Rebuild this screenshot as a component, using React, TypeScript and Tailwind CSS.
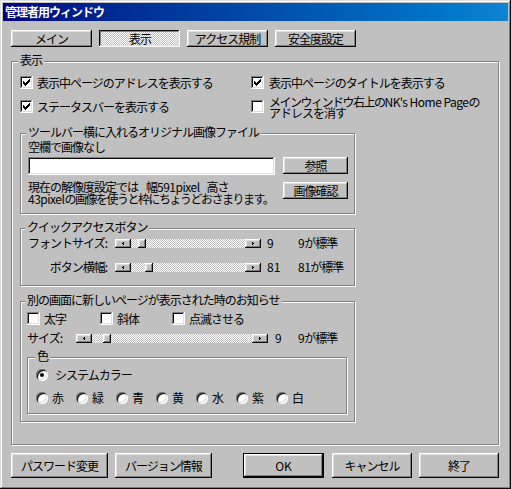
import React from 'react';

// classic 3D bevels
const raised = 'shadow-[inset_-1px_-1px_#0a0a0a,inset_1px_1px_#fff,inset_-2px_-2px_#808080,inset_2px_2px_#dfdfdf]';
const pressed = 'shadow-[inset_-1px_-1px_#fff,inset_1px_1px_#0a0a0a,inset_-2px_-2px_#dfdfdf,inset_2px_2px_#808080]';
const sunken = 'shadow-[inset_-1px_-1px_#fff,inset_1px_1px_#808080,inset_-2px_-2px_#dfdfdf,inset_2px_2px_#0a0a0a]';
const dither = 'bg-[image:repeating-conic-gradient(#fff_0%_25%,#c0c0c0_0%_50%)] bg-[length:2px_2px]';

interface BtnProps {
  className?: string;
  children: React.ReactNode;
  down?: boolean;
  isDefault?: boolean;
}

const Btn: React.FC<BtnProps> = ({ className = '', children, down, isDefault }) => (
  <div
    className={`flex shrink-0 items-center justify-center ${down ? `${pressed} ${dither} pt-[1px] pl-[1px]` : `bg-[#c0c0c0] ${raised}`} ${
      isDefault ? 'border border-black' : ''
    } ${className}`}
  >
    {children}
  </div>
);

// latin runs get a little less squeeze than the kana
const L: React.FC<{ children: React.ReactNode }> = ({ children }) => <span className="tracking-[-0.5px]">{children}</span>;

const Check: React.FC<{ checked?: boolean }> = ({ checked }) => (
  <span className={`flex h-[13px] w-[13px] shrink-0 items-center justify-center bg-white ${sunken}`}>
    {checked && (
      <svg width="7" height="7" viewBox="0 0 7 7" shapeRendering="crispEdges">
        <path d="M6 0h1v1H6zM5 1h2v1H5zM0 2h1v1H0zM4 2h3v1H4zM0 3h2v1H0zM3 3h3v1H3zM0 4h5v1H0zM1 5h3v1H1zM2 6h1v1H2z" fill="#000" />
      </svg>
    )}
  </span>
);

const Radio: React.FC<{ checked?: boolean }> = ({ checked }) => (
  <span className="flex h-[12px] w-[12px] shrink-0 items-center justify-center rounded-full bg-white shadow-[inset_1px_1px_#808080,inset_-1px_-1px_#fff,inset_2px_2px_#0a0a0a,inset_-2px_-2px_#dfdfdf]">
    {checked && <span className="h-[4px] w-[4px] rounded-full bg-black" />}
  </span>
);

const Slider: React.FC<{ className: string; thumbClass: string }> = ({ className, thumbClass }) => (
  <div className={`flex h-[9px] shrink-0 ${dither} ${className}`}>
    <span className={`flex w-[16px] items-center justify-center bg-[#c0c0c0] ${raised}`}>
      <svg width="2" height="3" viewBox="0 0 2 3" shapeRendering="crispEdges">
        <path d="M1 0h1v3H1zM0 1h1v1H0z" fill="#000" />
      </svg>
    </span>
    <span className={`w-[8px] bg-[#c0c0c0] ${raised} ${thumbClass}`} />
    <span className="flex-1" />
    <span className={`flex w-[16px] items-center justify-center bg-[#c0c0c0] ${raised}`}>
      <svg width="2" height="3" viewBox="0 0 2 3" shapeRendering="crispEdges">
        <path d="M0 0h1v3H0zM1 1h1v1H1z" fill="#000" />
      </svg>
    </span>
  </div>
);

interface GroupProps {
  label: string;
  labelClass: string;
  className: string;
  children: React.ReactNode;
}

const Group: React.FC<GroupProps> = ({ label, labelClass, className, children }) => (
  <div className={`relative shrink-0 border border-[#808080] shadow-[inset_1px_1px_#fff,1px_1px_#fff] ${className}`}>
    <span className={`absolute -top-[8px] whitespace-nowrap bg-[#c0c0c0] px-[2px] leading-[12px] ${labelClass}`}>{label}</span>
    {children}
  </div>
);

const colors = ['赤', '緑', '青', '黄', '水', '紫', '白'];

export default function App() {
  return (
    <div className="flex h-[489px] w-[511px] flex-col bg-[#c0c0c0] p-[3px] font-['Noto_Sans_CJK_JP','Noto_Sans',sans-serif] text-[12px] leading-[12px] tracking-[-1px] text-black shadow-[inset_-1px_-1px_#0a0a0a,inset_1px_1px_#dfdfdf,inset_-2px_-2px_#808080,inset_2px_2px_#fff]">
      {/* title bar */}
      <div className="flex h-[18px] shrink-0 items-center bg-linear-to-r from-[#000080] to-[#1084d0] pl-[2px] font-bold text-white">
        管理者用ウィンドウ
      </div>

      <div className="flex flex-col pl-[8px]">
        <div className="mt-[9px] flex gap-[7px]">
          <Btn className="h-[17px] w-[81px]">メイン</Btn>
          <Btn className="h-[17px] w-[81px]" down>
            表示
          </Btn>
          <Btn className="h-[17px] w-[81px]">アクセス規制</Btn>
          <Btn className="h-[17px] w-[81px]">安全度設定</Btn>
        </div>

        <Group label="表示" labelClass="left-[6px]" className="mt-[14px] h-[384px] w-[488px] pl-[8px] pt-[14px]">
          <div className="grid grid-cols-[231px_1fr]">
            <div className="flex h-[13px] items-center gap-[4px]">
              <Check checked />
              <span className="whitespace-nowrap">表示中ページのアドレスを表示する</span>
            </div>
            <div className="flex h-[13px] items-center gap-[5px]">
              <Check checked />
              <span className="whitespace-nowrap">表示中ページのタイトルを表示する</span>
            </div>
            <div className="mt-[11px] flex h-[13px] items-center gap-[4px]">
              <Check checked />
              <span className="whitespace-nowrap">ステータスバーを表示する</span>
            </div>
            <div className="mt-[11px] flex h-[13px] items-center gap-[5px]">
              <Check />
              <span className="whitespace-nowrap leading-[11px]">
                <span className="tracking-[-1.5px]">メインウィンドウ右上の</span>
                <L>NK's Home Page</L>の
                <br />
                アドレスを消す
              </span>
            </div>
          </div>

          {/* original image file */}
          <Group
            label="ツールバー横に入れるオリジナル画像ファイル"
            labelClass="left-[5px]"
            className="mt-[20px] h-[81px] w-[335px] pl-[7px] pt-[7px]"
          >
            <div>空欄で画像なし</div>
            <div className="mt-[4px] flex">
              <div className={`h-[18px] w-[247px] bg-white ${sunken}`} />
              <Btn className="ml-[8px] h-[17px] w-[65px]">参照</Btn>
            </div>
            <div className="mt-[6px] flex items-start">
              <div className="w-[247px] whitespace-nowrap leading-[12px]">
                現在の解像度設定では<span className="inline-block w-[8px]" />幅<L>591pixel</L>
                <span className="inline-block w-[7px]" />
                高さ
                <br />
                <L>43pixel</L>
                <span className="tracking-[-1.5px]">の画像を使うと枠にちょうどおさまります。</span>
              </div>
              <Btn className="ml-[8px] mt-[1px] h-[17px] w-[65px]">画像確認</Btn>
            </div>
          </Group>

          {/* quick access */}
          <Group label="クイックアクセスボタン" labelClass="left-[4px]" className="mt-[14px] h-[58px] w-[335px] pt-[8px]">
            <div className="flex h-[12px] items-center">
              <span className="w-[86px] text-right">フォントサイズ:</span>
              <Slider className="ml-[8px] w-[146px]" thumbClass="ml-[7px]" />
              <span className="ml-[6px] w-[31px] tracking-normal">9</span>
              <span className="whitespace-nowrap">
                <L>9</L>が標準
              </span>
            </div>
            <div className="mt-[12px] flex h-[12px] items-center">
              <span className="w-[86px] text-right">ボタン横幅:</span>
              <Slider className="ml-[8px] w-[146px]" thumbClass="ml-[14px]" />
              <span className="ml-[6px] w-[31px] tracking-normal">81</span>
              <span className="whitespace-nowrap">
                <L>81</L>が標準
              </span>
            </div>
          </Group>

          {/* notification */}
          <Group
            label="別の画面に新しいページが表示された時のお知らせ"
            labelClass="left-[4px]"
            className="mt-[15px] h-[121px] w-[335px] pl-[6px] pt-[10px]"
          >
            <div className="flex h-[13px] items-center">
              <div className="flex w-[73px] items-center gap-[4px]">
                <Check />
                <span>太字</span>
              </div>
              <div className="flex w-[72px] items-center gap-[4px]">
                <Check />
                <span>斜体</span>
              </div>
              <div className="flex items-center gap-[4px]">
                <Check />
                <span>点滅させる</span>
              </div>
            </div>
            <div className="mt-[7px] flex h-[12px] items-center">
              <span className="w-[49px]">サイズ:</span>
              <Slider className="w-[192px]" thumbClass="ml-[11px]" />
              <span className="ml-[7px] w-[23px] tracking-normal">9</span>
              <span className="whitespace-nowrap">
                <L>9</L>が標準
              </span>
            </div>

            <Group label="色" labelClass="left-[7px]" className="mt-[13px] h-[57px] w-[320px] pl-[8px] pt-[11px]">
              <div className="flex h-[12px] items-center gap-[7px]">
                <Radio checked />
                <span>システムカラー</span>
              </div>
              <div className="mt-[11px] flex h-[12px]">
                {colors.map((c) => (
                  <div key={c} className="flex w-[40px] items-center gap-[4px]">
                    <Radio />
                    <span>{c}</span>
                  </div>
                ))}
              </div>
            </Group>
          </Group>
        </Group>

        {/* bottom buttons */}
        <div className="mt-[8px] flex">
          <Btn className="h-[25px] w-[97px]">パスワード変更</Btn>
          <Btn className="ml-[7px] h-[25px] w-[97px]">バージョン情報</Btn>
          <Btn className="ml-[31px] h-[25px] w-[81px] tracking-normal" isDefault>
            OK
          </Btn>
          <Btn className="ml-[8px] h-[25px] w-[80px]">キャンセル</Btn>
          <Btn className="ml-[7px] h-[25px] w-[80px]">終了</Btn>
        </div>
      </div>
    </div>
  );
}
